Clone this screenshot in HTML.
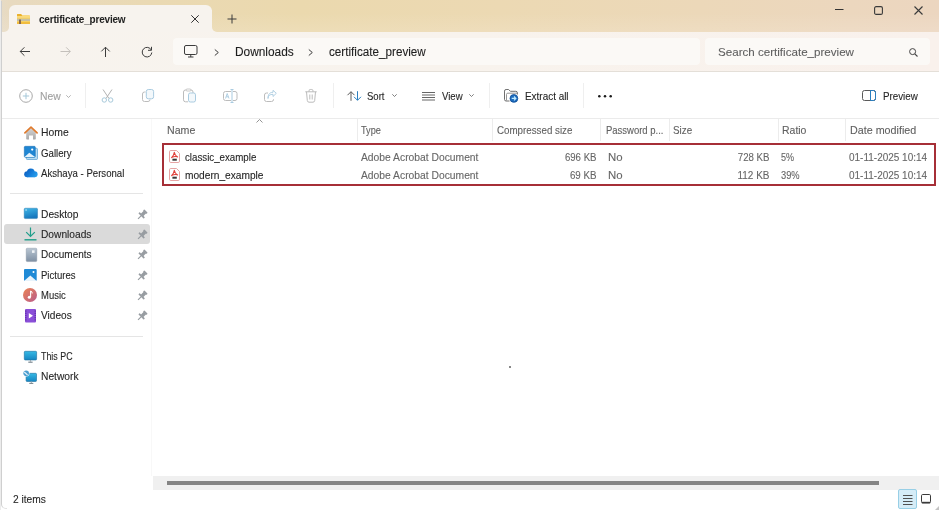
<!DOCTYPE html>
<html><head><meta charset="utf-8">
<style>
*{margin:0;padding:0;box-sizing:border-box}
html,body{width:939px;height:510px;overflow:hidden;background:#fff}
body{position:relative;font-family:"Liberation Sans",sans-serif;color:#1c1c1c}
.a{position:absolute}
.t{position:absolute;white-space:nowrap;line-height:1;filter:grayscale(1);-webkit-text-stroke:0.1px currentColor}
svg{position:absolute;overflow:visible}
#lightbg{left:0;top:0;width:939px;height:72px;background:linear-gradient(90deg,#f7f3ee 0%,#f8f3ed 50%,#f9f1ec 100%);border-bottom:1px solid #e4dfd8}
.bgtan{position:absolute;background-image:linear-gradient(180deg,rgba(255,255,255,0) 40%,rgba(255,255,255,0.12) 100%),linear-gradient(90deg,#e6dbc6 0px,#e8dac0 9px,#ead9b3 150px,#ebd9ae 300px,#ecd9b3 500px,#ecd8b9 700px,#ecd7be 850px,#ecd6c0 939px);background-size:939px 32px;background-repeat:no-repeat}
#tab{left:9px;top:5px;width:203px;height:27px;background:#f7f3ee;border-radius:6px 6px 0 0}
#addr{left:173px;top:38px;width:527px;height:27px;background:#fbf9f6;border-radius:4px}
#search{left:705px;top:38px;width:225px;height:27px;background:#fbf9f6;border-radius:4px}
#tb{left:0;top:72px;width:939px;height:47px;background:#fff;border-bottom:1px solid #ebebeb}
.sep{position:absolute;width:1px;top:83px;height:25px;background:#efefef}
.csep{position:absolute;width:1px;top:119px;height:22px;background:#ececec}
.nt{font-size:10.3px;color:#262626}
.hd{font-size:10.3px;color:#606060}
.rw{font-size:10.3px;color:#262626}
.gr{font-size:10.3px;color:#666}
.tl{font-size:10.3px;color:#262626}
.pin{position:absolute;left:137px;width:10px;height:10px}
</style></head><body>
<div id="lightbg" class="a"></div>
<div class="bgtan" style="left:0;top:0;width:939px;height:10px;background-position:0 0"></div>
<div class="bgtan" style="left:0;top:0;width:9px;height:32px;background-position:0 0;border-bottom-right-radius:5px"></div>
<div class="bgtan" style="left:212px;top:0;width:727px;height:32px;background-position:-212px 0;border-bottom-left-radius:5px"></div>
<div id="tab" class="a"></div>
<div id="addr" class="a"></div>
<div id="search" class="a"></div>
<div id="tb" class="a"></div>

<!-- window left border -->
<div class="a" style="left:1px;top:1px;width:6px;height:508px;border-left:1px solid #cfcfcf;border-bottom:1px solid #e2e2e2;border-bottom-left-radius:5px"></div><div class="a" style="left:0;top:0;width:1px;height:510px;background:#ececec"></div>

<!-- ===== TITLE BAR ===== -->
<svg style="left:17px;top:13.5px" width="13" height="10" viewBox="0 0 13 10"><path d="M0 0.8 A0.8 0.8 0 0 1 0.8 0 H4 L5.2 1.2 H12.2 A0.8 0.8 0 0 1 13 2 V9.2 A0.8 0.8 0 0 1 12.2 10 H0.8 A0.8 0.8 0 0 1 0 9.2 Z" fill="#f7d062"/><path d="M0 0.8 A0.8 0.8 0 0 1 0.8 0 H4 L5.5 2.3 H0 Z" fill="#eab02c"/><rect x="0" y="2.3" width="13" height="1.2" fill="#fbe08a"/><rect x="0" y="4.8" width="13" height="2.2" fill="#c6c0a4"/><rect x="0" y="8" width="13" height="2" fill="#f2bd3e"/><rect x="2" y="5.5" width="2" height="4.5" fill="#8b6a48"/></svg>
<div class="t" style="left:38.5px;top:14px;font-size:10.8px;color:#222;font-weight:bold;letter-spacing:-0.2px;-webkit-text-stroke:0;transform:scaleX(0.925);transform-origin:0 0">certificate_preview</div>
<svg style="left:190.5px;top:14.5px" width="8" height="8" viewBox="0 0 8 8"><path d="M0.3 0.3 L7.7 7.7 M7.7 0.3 L0.3 7.7" stroke="#333" stroke-width="1"/></svg>
<svg style="left:227px;top:14px" width="10" height="10" viewBox="0 0 10 10"><path d="M5 0.5 V9.5 M0.5 5 H9.5" stroke="#3a3a3a" stroke-width="1"/></svg>
<svg style="left:835px;top:9px" width="9" height="2" viewBox="0 0 9 2"><path d="M0 0.5 H8.5" stroke="#333" stroke-width="1"/></svg>
<svg style="left:874px;top:6px" width="9" height="9" viewBox="0 0 9 9"><rect x="0.6" y="0.6" width="7.8" height="7.8" rx="1.5" fill="none" stroke="#3a3a3a" stroke-width="1.1"/></svg>
<svg style="left:914px;top:5.5px" width="9" height="9" viewBox="0 0 9 9"><path d="M0.5 0.5 L8.5 8.5 M8.5 0.5 L0.5 8.5" stroke="#3a3a3a" stroke-width="1.1"/></svg>

<!-- ===== NAV BAR ===== -->
<svg style="left:19px;top:46px" width="12" height="12" viewBox="0 0 12 12"><path d="M11 5.5 H1.2 M5.4 1.3 L1.2 5.5 L5.4 9.7" fill="none" stroke="#3c3c3c" stroke-width="1"/></svg>
<svg style="left:60px;top:46px" width="12" height="12" viewBox="0 0 12 12"><path d="M0.5 5.5 H10.3 M6.1 1.3 L10.3 5.5 L6.1 9.7" fill="none" stroke="#c4c0bb" stroke-width="1"/></svg>
<svg style="left:100px;top:46px" width="12" height="12" viewBox="0 0 12 12"><path d="M5.5 11 V1.2 M1.3 5.4 L5.5 1.2 L9.7 5.4" fill="none" stroke="#3c3c3c" stroke-width="1"/></svg>
<svg style="left:141px;top:46px" width="12" height="12" viewBox="0 0 12 12"><path d="M10.3 4 A4.8 4.8 0 1 0 10.8 6.5" fill="none" stroke="#3c3c3c" stroke-width="1"/><path d="M10.5 0.8 V4.3 H7" fill="none" stroke="#3c3c3c" stroke-width="1"/></svg>
<svg style="left:184px;top:45px" width="14" height="13" viewBox="0 0 14 13"><rect x="0.5" y="0.5" width="12.5" height="9" rx="1.5" fill="none" stroke="#3c3c3c" stroke-width="1"/><path d="M4 12 H9.5 M6.75 9.5 V12" stroke="#3c3c3c" stroke-width="1"/></svg>
<svg style="left:214px;top:48.5px" width="6" height="7" viewBox="0 0 6 7"><path d="M0.8 0.5 L4.3 3.5 L0.8 6.5" fill="none" stroke="#3c3c3c" stroke-width="1"/></svg>
<div class="t" style="left:235px;top:45.6px;font-size:12px;color:#1e1e1e;transform:scaleX(0.990);transform-origin:0 0">Downloads</div>
<svg style="left:308px;top:48.5px" width="6" height="7" viewBox="0 0 6 7"><path d="M0.8 0.5 L4.3 3.5 L0.8 6.5" fill="none" stroke="#3c3c3c" stroke-width="1"/></svg>
<div class="t" style="left:328.5px;top:45.6px;font-size:12px;color:#1e1e1e;transform:scaleX(0.974);transform-origin:0 0">certificate_preview</div>
<div class="t" style="left:718px;top:47.2px;font-size:11.8px;color:#5f5f5f;transform:scaleX(0.983);transform-origin:0 0">Search certificate_preview</div>
<svg style="left:909px;top:48px" width="9" height="9" viewBox="0 0 9 9"><circle cx="3.6" cy="3.6" r="3" fill="none" stroke="#444" stroke-width="1"/><path d="M5.8 5.8 L8.5 8.5" stroke="#444" stroke-width="1.1"/></svg>

<!-- ===== TOOLBAR ===== -->
<svg style="left:19px;top:88.5px" width="14" height="14" viewBox="0 0 14 14"><circle cx="7" cy="7" r="6.3" fill="none" stroke="#a9a9a9" stroke-width="1"/><path d="M7 3.8 V10.2 M3.8 7 H10.2" stroke="#a5c7d8" stroke-width="1"/></svg>
<div class="t tl" style="left:40px;top:91.6px;color:#a0a0a0;transform:scaleX(1.005);transform-origin:0 0">New</div>
<svg style="left:65.5px;top:94.5px" width="5" height="3" viewBox="0 0 5 3"><path d="M0.3 0.3 L2.5 2.5 L4.7 0.3" fill="none" stroke="#a0a0a0" stroke-width="0.8"/></svg>
<div class="sep" style="left:85px"></div>
<!-- scissors -->
<svg style="left:101px;top:89px" width="13" height="14" viewBox="0 0 13 14"><path d="M2 0.5 L8 9.5 M11 0.5 L5 9.5" stroke="#b3b3b3" stroke-width="1"/><circle cx="3.3" cy="11" r="2.2" fill="none" stroke="#a8cadb" stroke-width="1"/><circle cx="9.7" cy="11" r="2.2" fill="none" stroke="#a8cadb" stroke-width="1"/></svg>
<!-- copy -->
<svg style="left:142px;top:89px" width="13" height="14" viewBox="0 0 13 14"><path d="M3.5 3 H2.5 A2 2 0 0 0 0.5 5 V10.5 A2 2 0 0 0 2.5 12.5 H6 A2 2 0 0 0 8 10.5" fill="none" stroke="#bcbcbc" stroke-width="1"/><rect x="4.3" y="0.5" width="7.3" height="9.3" rx="2" fill="#f3f8fb" stroke="#a9cbe0" stroke-width="1"/></svg>
<!-- paste -->
<svg style="left:182.5px;top:89px" width="14" height="14" viewBox="0 0 14 14"><path d="M5 12.8 H2.5 A2 2 0 0 1 0.5 10.8 V3 A2 2 0 0 1 2.5 1 H8 A2 2 0 0 1 10 3 V4" fill="none" stroke="#bcbcbc" stroke-width="1"/><rect x="3" y="0" width="5" height="2" rx="1" fill="#fff" stroke="#bcbcbc" stroke-width="0.8"/><rect x="5.5" y="4" width="7" height="9" rx="1.8" fill="#f3f8fb" stroke="#a9cbe0" stroke-width="1"/></svg>
<!-- rename -->
<svg style="left:222.5px;top:88.5px" width="15" height="14" viewBox="0 0 15 14"><rect x="0.5" y="2.5" width="13.5" height="9" rx="2" fill="none" stroke="#bcbcbc" stroke-width="1"/><rect x="8" y="1" width="2" height="12" fill="#fff"/><path d="M9 0.5 V13.5 M7.5 0.5 H10.5 M7.5 13.5 H10.5" stroke="#a9cbe0" stroke-width="1"/><path d="M2.5 9.5 L4.2 4.5 L6 9.5 M3.1 7.8 H5.4" fill="none" stroke="#a9cbe0" stroke-width="0.9"/></svg>
<!-- share -->
<svg style="left:264px;top:90px" width="13" height="12" viewBox="0 0 13 12"><path d="M4 3 H2.5 A2 2 0 0 0 0.5 5 V9.5 A2 2 0 0 0 2.5 11.5 H7.5 A2 2 0 0 0 9.5 9.5 V9" fill="none" stroke="#bcbcbc" stroke-width="1"/><path d="M4 8.5 C4 5.5 6 4.3 9 4.3 V6.5 L12.3 3.3 L9 0.3 V2.3 C5.5 2.3 4 4.5 4 8.5 Z" fill="none" stroke="#a9cbe0" stroke-width="0.9"/></svg>
<!-- delete -->
<svg style="left:305px;top:89px" width="12" height="14" viewBox="0 0 12 14"><path d="M0.3 2.8 H11.7 M4 2.8 V1.8 A1.3 1.3 0 0 1 5.3 0.5 H6.7 A1.3 1.3 0 0 1 8 1.8 V2.8 M1.5 2.8 L2.3 11.5 A1.8 1.8 0 0 0 4 13.2 H8 A1.8 1.8 0 0 0 9.7 11.5 L10.5 2.8 M4.8 5.5 V10.5 M7.2 5.5 V10.5" fill="none" stroke="#bcbcbc" stroke-width="1"/></svg>
<div class="sep" style="left:333px"></div>
<!-- sort -->
<svg style="left:346.5px;top:90.5px" width="15" height="10" viewBox="0 0 15 10"><path d="M4 9.8 V0.8 M0.5 4.2 L4 0.7 L7.5 4.2" fill="none" stroke="#5a5a5a" stroke-width="1"/><path d="M10.5 0.2 V9.2 M7 5.8 L10.5 9.3 L14 5.8" fill="none" stroke="#2a7fc0" stroke-width="1"/></svg>
<div class="t tl" style="left:367px;top:91.6px;transform:scaleX(0.926);transform-origin:0 0">Sort</div>
<svg style="left:391.5px;top:94.3px" width="5" height="3" viewBox="0 0 5 3"><path d="M0.3 0.3 L2.5 2.5 L4.7 0.3" fill="none" stroke="#606060" stroke-width="0.8"/></svg>
<!-- view -->
<svg style="left:421.5px;top:91.6px" width="14" height="9" viewBox="0 0 14 9"><path d="M0 0.5 H13 M0 3 H13 M0 5.5 H13 M0 8 H13" stroke="#555" stroke-width="0.9"/></svg>
<div class="t tl" style="left:441.5px;top:91.6px;transform:scaleX(0.930);transform-origin:0 0">View</div>
<svg style="left:469px;top:94.3px" width="5" height="3" viewBox="0 0 5 3"><path d="M0.3 0.3 L2.5 2.5 L4.7 0.3" fill="none" stroke="#606060" stroke-width="0.8"/></svg>
<div class="sep" style="left:488.5px"></div>
<!-- extract -->
<svg style="left:503.5px;top:89px" width="15" height="14" viewBox="0 0 15 14"><path d="M5.5 12 H2 A1.6 1.6 0 0 1 0.5 10.4 V2.1 A1.6 1.6 0 0 1 2.1 0.5 H4.6 L6.4 2.3 H11.8 A1.6 1.6 0 0 1 13.4 3.9 V5.5" fill="none" stroke="#6e6e6e" stroke-width="1"/><path d="M2.5 11.5 V5.5 A1.3 1.3 0 0 1 3.8 4.2 H13.3" fill="none" stroke="#8a8a8a" stroke-width="0.9"/><circle cx="9.9" cy="9.4" r="3.9" fill="#1c6cbf" stroke="#0f4d94" stroke-width="0.8"/><path d="M7.7 9.4 H11.9 M10 7.5 L11.9 9.4 L10 11.3" fill="none" stroke="#bfeaff" stroke-width="1.1"/></svg>
<div class="t tl" style="left:524.5px;top:91.6px;transform:scaleX(0.964);transform-origin:0 0">Extract all</div>
<div class="sep" style="left:583px"></div>
<svg style="left:597.5px;top:94.5px" width="14" height="3" viewBox="0 0 14 3"><circle cx="1.3" cy="1.3" r="1.25" fill="#1a1a1a"/><circle cx="7" cy="1.3" r="1.25" fill="#1a1a1a"/><circle cx="12.7" cy="1.3" r="1.25" fill="#1a1a1a"/></svg>
<!-- preview -->
<svg style="left:862px;top:90px" width="14" height="11" viewBox="0 0 14 11"><rect x="0.5" y="0.5" width="13" height="10" rx="2" fill="none" stroke="#5a5a5a" stroke-width="1"/><path d="M8.5 0.5 V10.5" stroke="#2a7fc0" stroke-width="1"/><path d="M8.5 0.5 H11.5 A2 2 0 0 1 13.5 2.5 V8.5 A2 2 0 0 1 11.5 10.5 H8.5" fill="none" stroke="#2a7fc0" stroke-width="1"/></svg>
<div class="t tl" style="left:882.5px;top:91.6px;transform:scaleX(0.950);transform-origin:0 0">Preview</div>

<!-- ===== NAV PANE ===== -->
<div class="a" style="left:151px;top:119px;width:1px;height:357px;background:#f8f8f8"></div>
<div class="a" style="left:3.5px;top:224px;width:146px;height:20px;background:#dadada;border-radius:3px"></div>
<div class="a" style="left:10px;top:193px;width:133px;height:1px;background:#e5e5e5"></div>
<div class="a" style="left:10px;top:336px;width:133px;height:1px;background:#e5e5e5"></div>

<!-- home -->
<svg style="left:23.5px;top:125.5px" width="14" height="14" viewBox="0 0 14 14"><defs><linearGradient id="hg" x1="0" y1="0" x2="0" y2="1"><stop offset="0" stop-color="#d4d4d4"/><stop offset="1" stop-color="#a9a9a9"/></linearGradient></defs><path d="M2.2 6.2 L7 2 L11.8 6.2 V12.8 A0.8 0.8 0 0 1 11 13.6 H9 V9.5 H5 V13.6 H3 A0.8 0.8 0 0 1 2.2 12.8 Z" fill="url(#hg)"/><path d="M0.9 6.9 L7 1.1 L13.1 6.9" fill="none" stroke="#df7b2e" stroke-width="1.7" stroke-linecap="round" stroke-linejoin="round"/></svg>
<div class="t nt" style="left:40.8px;top:128.0px;transform:scaleX(1.007);transform-origin:0 0">Home</div>
<!-- gallery -->
<svg style="left:23.5px;top:145.5px" width="14" height="14" viewBox="0 0 14 14"><rect x="2.3" y="2.3" width="11.2" height="11.2" rx="1" fill="#b5dcf3" stroke="#3f8fc8" stroke-width="0.6"/><rect x="0.3" y="0.3" width="11" height="11" rx="1" fill="#1f86d3" stroke="#1468ad" stroke-width="0.5"/><path d="M0.5 11.1 L5.3 6.8 L11.1 11.1 Z" fill="#e2f2fc"/><circle cx="8.2" cy="3.6" r="1.1" fill="#fff"/></svg>
<div class="t nt" style="left:40.8px;top:148.5px;transform:scaleX(0.939);transform-origin:0 0">Gallery</div>
<!-- onedrive -->
<svg style="left:23.5px;top:167.8px" width="14" height="10" viewBox="0 0 14 10"><defs><linearGradient id="od" gradientUnits="userSpaceOnUse" x1="2" y1="1" x2="12" y2="9"><stop offset="0" stop-color="#0b5cbf"/><stop offset="0.55" stop-color="#1780db"/><stop offset="1" stop-color="#2aa0ec"/></linearGradient></defs><g fill="url(#od)"><circle cx="6.8" cy="4.3" r="3.9"/><circle cx="3.2" cy="6.2" r="3"/><circle cx="10.6" cy="6.3" r="3"/><rect x="3.2" y="4.5" width="7.4" height="4.8"/></g></svg>
<div class="t nt" style="left:40.8px;top:168.5px;transform:scaleX(0.933);transform-origin:0 0">Akshaya - Personal</div>

<!-- desktop -->
<svg style="left:23.5px;top:208.3px" width="14" height="11" viewBox="0 0 14 11"><defs><linearGradient id="dk" x1="0" y1="0" x2="0.3" y2="1"><stop offset="0" stop-color="#41b8e8"/><stop offset="1" stop-color="#1677bd"/></linearGradient></defs><rect x="0.2" y="0.2" width="13.3" height="10.4" rx="1" fill="url(#dk)" stroke="#1a6aa5" stroke-width="0.4"/><rect x="1.5" y="1.5" width="1.2" height="1" fill="#fff"/></svg>
<div class="t nt" style="left:40.8px;top:209.6px;transform:scaleX(0.992);transform-origin:0 0">Desktop</div>
<!-- downloads -->
<svg style="left:24px;top:227px" width="13" height="14" viewBox="0 0 13 14"><path d="M6.5 0.5 V9.3 M2.2 5.2 L6.5 9.5 L10.8 5.2" fill="none" stroke="#1f9e8a" stroke-width="1.2"/><path d="M0.5 12.8 H12.5" stroke="#1f9e8a" stroke-width="1.4"/></svg>
<div class="t nt" style="left:40.8px;top:229.5px;transform:scaleX(0.990);transform-origin:0 0">Downloads</div>
<!-- documents -->
<svg style="left:25.5px;top:248px" width="11" height="14" viewBox="0 0 11 14"><defs><linearGradient id="dc" x1="0" y1="0" x2="0" y2="1"><stop offset="0" stop-color="#b9c6d3"/><stop offset="1" stop-color="#7f90a3"/></linearGradient></defs><rect x="0.2" y="0.2" width="10.6" height="13.4" rx="1" fill="url(#dc)" stroke="#7d8c9c" stroke-width="0.4"/><rect x="6" y="2.3" width="2.6" height="2.6" fill="#eef2f6"/></svg>
<div class="t nt" style="left:40.8px;top:249.8px;transform:scaleX(0.971);transform-origin:0 0">Documents</div>
<!-- pictures -->
<svg style="left:24px;top:268.5px" width="13" height="13" viewBox="0 0 13 13"><rect x="0" y="0" width="12.7" height="12" rx="1" fill="#1f8ad6"/><path d="M0 12 L6.3 6.5 L12.7 12 Z" fill="#e8f4fc"/><circle cx="9.5" cy="3" r="1" fill="#fff"/></svg>
<div class="t nt" style="left:40.8px;top:270.8px;transform:scaleX(0.927);transform-origin:0 0">Pictures</div>
<!-- music -->
<svg style="left:23.3px;top:288px" width="14" height="14" viewBox="0 0 14 14"><defs><linearGradient id="mg" x1="0" y1="0" x2="1" y2="1"><stop offset="0" stop-color="#ec8452"/><stop offset="1" stop-color="#b85c8c"/></linearGradient></defs><circle cx="7" cy="7" r="7" fill="url(#mg)"/><path d="M7.6 3 V9" stroke="#fff" stroke-width="1.1"/><circle cx="6.3" cy="9.2" r="1.5" fill="#fff"/><path d="M7.6 3 Q9.5 3.5 9.2 5.5" fill="none" stroke="#fff" stroke-width="1"/></svg>
<div class="t nt" style="left:40.8px;top:291.0px;transform:scaleX(0.919);transform-origin:0 0">Music</div>
<!-- videos -->
<svg style="left:25px;top:308.5px" width="12" height="14" viewBox="0 0 12 14"><rect x="0" y="0" width="11" height="13.5" rx="1" fill="#8a4fd8"/><path d="M0.8 1.5 V12.5 M10.2 1.5 V12.5" stroke="#5e2ea8" stroke-width="1.2" stroke-dasharray="1.2 1"/><path d="M3.8 4 L8 6.75 L3.8 9.5 Z" fill="#fff"/></svg>
<div class="t nt" style="left:40.8px;top:311.1px;transform:scaleX(0.981);transform-origin:0 0">Videos</div>

<!-- pins -->
<svg class="pin" style="top:209.7px" viewBox="0 0 10 10"><g transform="rotate(45 5 5)" fill="#979ca1"><rect x="2.6" y="-0.6" width="4.8" height="1.8" rx="0.6"/><rect x="3.3" y="0.8" width="3.4" height="4.2"/><rect x="1.2" y="4.6" width="7.6" height="1.8" rx="0.6"/><rect x="4.45" y="6" width="1.1" height="4.6"/></g></svg>
<svg class="pin" style="top:230.0px" viewBox="0 0 10 10"><g transform="rotate(45 5 5)" fill="#979ca1"><rect x="2.6" y="-0.6" width="4.8" height="1.8" rx="0.6"/><rect x="3.3" y="0.8" width="3.4" height="4.2"/><rect x="1.2" y="4.6" width="7.6" height="1.8" rx="0.6"/><rect x="4.45" y="6" width="1.1" height="4.6"/></g></svg>
<svg class="pin" style="top:250.3px" viewBox="0 0 10 10"><g transform="rotate(45 5 5)" fill="#979ca1"><rect x="2.6" y="-0.6" width="4.8" height="1.8" rx="0.6"/><rect x="3.3" y="0.8" width="3.4" height="4.2"/><rect x="1.2" y="4.6" width="7.6" height="1.8" rx="0.6"/><rect x="4.45" y="6" width="1.1" height="4.6"/></g></svg>
<svg class="pin" style="top:270.6px" viewBox="0 0 10 10"><g transform="rotate(45 5 5)" fill="#979ca1"><rect x="2.6" y="-0.6" width="4.8" height="1.8" rx="0.6"/><rect x="3.3" y="0.8" width="3.4" height="4.2"/><rect x="1.2" y="4.6" width="7.6" height="1.8" rx="0.6"/><rect x="4.45" y="6" width="1.1" height="4.6"/></g></svg>
<svg class="pin" style="top:290.9px" viewBox="0 0 10 10"><g transform="rotate(45 5 5)" fill="#979ca1"><rect x="2.6" y="-0.6" width="4.8" height="1.8" rx="0.6"/><rect x="3.3" y="0.8" width="3.4" height="4.2"/><rect x="1.2" y="4.6" width="7.6" height="1.8" rx="0.6"/><rect x="4.45" y="6" width="1.1" height="4.6"/></g></svg>
<svg class="pin" style="top:311.2px" viewBox="0 0 10 10"><g transform="rotate(45 5 5)" fill="#979ca1"><rect x="2.6" y="-0.6" width="4.8" height="1.8" rx="0.6"/><rect x="3.3" y="0.8" width="3.4" height="4.2"/><rect x="1.2" y="4.6" width="7.6" height="1.8" rx="0.6"/><rect x="4.45" y="6" width="1.1" height="4.6"/></g></svg>

<!-- this pc -->
<svg style="left:24.3px;top:350.5px" width="13" height="12" viewBox="0 0 13 12"><defs><linearGradient id="pc" x1="0" y1="0" x2="0" y2="1"><stop offset="0" stop-color="#36b9e4"/><stop offset="1" stop-color="#1585c2"/></linearGradient></defs><rect x="0.3" y="0.3" width="12.3" height="8.7" rx="0.9" fill="url(#pc)" stroke="#1b6e9e" stroke-width="0.6"/><path d="M4.3 11.2 H8.6" stroke="#7a8790" stroke-width="1.2"/><path d="M6.45 9 V10.8" stroke="#9aa5ad" stroke-width="1"/></svg>
<div class="t nt" style="left:41px;top:352.0px;transform:scaleX(0.861);transform-origin:0 0">This PC</div>
<!-- network -->
<svg style="left:23.3px;top:369.5px" width="14" height="14" viewBox="0 0 14 14"><defs><linearGradient id="nw" x1="0" y1="0" x2="0" y2="1"><stop offset="0" stop-color="#36b9e4"/><stop offset="1" stop-color="#1585c2"/></linearGradient></defs><rect x="3.1" y="3.3" width="10.4" height="8.2" rx="0.9" fill="url(#nw)" stroke="#1b6e9e" stroke-width="0.6"/><path d="M6.3 13.4 H10.3" stroke="#7a8790" stroke-width="1.1"/><path d="M8.3 11.5 V13" stroke="#9aa5ad" stroke-width="1"/><circle cx="3.2" cy="3.2" r="3.2" fill="#fff"/><circle cx="3.2" cy="3.2" r="2.8" fill="#4d9fd0"/><path d="M1.2 2 Q3 3.5 4.6 5.2" stroke="#e6f3fb" stroke-width="1.1" fill="none"/></svg>
<div class="t nt" style="left:40.8px;top:371.6px;transform:scaleX(0.995);transform-origin:0 0">Network</div>

<!-- ===== CONTENT HEADER ===== -->
<svg style="left:255.5px;top:118.5px" width="7" height="4" viewBox="0 0 7 4"><path d="M0.5 3.5 L3.5 0.5 L6.5 3.5" fill="none" stroke="#7a7a7a" stroke-width="0.8"/></svg>
<div class="t hd" style="left:167px;top:125.5px;transform:scaleX(1.031);transform-origin:0 0">Name</div>
<div class="csep" style="left:356.5px"></div>
<div class="t hd" style="left:360.5px;top:125.5px;transform:scaleX(0.891);transform-origin:0 0">Type</div>
<div class="csep" style="left:491.5px"></div>
<div class="t hd" style="left:496.5px;top:125.5px;transform:scaleX(0.948);transform-origin:0 0">Compressed size</div>
<div class="csep" style="left:600px"></div>
<div class="t hd" style="left:605.5px;top:125.5px;transform:scaleX(0.921);transform-origin:0 0">Password p...</div>
<div class="csep" style="left:668.5px"></div>
<div class="t hd" style="left:673px;top:125.5px;transform:scaleX(0.953);transform-origin:0 0">Size</div>
<div class="csep" style="left:777.5px"></div>
<div class="t hd" style="left:781.5px;top:125.5px;transform:scaleX(1.017);transform-origin:0 0">Ratio</div>
<div class="csep" style="left:845px"></div>
<div class="t hd" style="left:849.5px;top:125.5px;transform:scaleX(1.043);transform-origin:0 0">Date modified</div>

<!-- ===== ROWS ===== -->
<svg style="left:169px;top:150px" width="11" height="13" viewBox="0 0 11 13"><path d="M1.8 0.5 H7.5 L10.5 3.5 V11.2 A1.3 1.3 0 0 1 9.2 12.5 H1.8 A1.3 1.3 0 0 1 0.5 11.2 V1.8 A1.3 1.3 0 0 1 1.8 0.5 Z" fill="#fff" stroke="#e39a9a" stroke-width="0.9"/><path d="M5.3 2.4 C5.2 4.2 4.2 6 2.6 7.6 M5.3 2.4 C5.6 4.5 6.8 6 8.6 7 M3.2 7.2 C4.8 6.4 6.6 6.3 8.2 6.8" fill="none" stroke="#e0413b" stroke-width="1.1" stroke-linecap="round"/><rect x="3.4" y="8.7" width="4.4" height="2" fill="#3a3a3a"/></svg>
<div class="t rw" style="left:184.5px;top:153.4px;transform:scaleX(0.944);transform-origin:0 0">classic_example</div>
<div class="t gr" style="left:360.5px;top:153.4px;transform:scaleX(1.001);transform-origin:0 0">Adobe Acrobat Document</div>
<div class="t gr" style="left:500px;top:153.4px;width:96.5px;text-align:right;transform:scaleX(0.936);transform-origin:100% 0">696 KB</div>
<div class="t gr" style="left:607.5px;top:153.4px;transform:scaleX(1.108);transform-origin:0 0">No</div>
<div class="t gr" style="left:673px;top:153.4px;width:96.5px;text-align:right;transform:scaleX(0.939);transform-origin:100% 0">728 KB</div>
<div class="t gr" style="left:781px;top:153.4px;transform:scaleX(0.880);transform-origin:0 0">5%</div>
<div class="t gr" style="left:848.5px;top:153.4px;transform:scaleX(0.970);transform-origin:0 0">01-11-2025 10:14</div>

<svg style="left:169px;top:168.2px" width="11" height="13" viewBox="0 0 11 13"><path d="M1.8 0.5 H7.5 L10.5 3.5 V11.2 A1.3 1.3 0 0 1 9.2 12.5 H1.8 A1.3 1.3 0 0 1 0.5 11.2 V1.8 A1.3 1.3 0 0 1 1.8 0.5 Z" fill="#fff" stroke="#e39a9a" stroke-width="0.9"/><path d="M5.3 2.4 C5.2 4.2 4.2 6 2.6 7.6 M5.3 2.4 C5.6 4.5 6.8 6 8.6 7 M3.2 7.2 C4.8 6.4 6.6 6.3 8.2 6.8" fill="none" stroke="#e0413b" stroke-width="1.1" stroke-linecap="round"/><rect x="3.4" y="8.7" width="4.4" height="2" fill="#3a3a3a"/></svg>
<div class="t rw" style="left:184.5px;top:171.3px;transform:scaleX(0.987);transform-origin:0 0">modern_example</div>
<div class="t gr" style="left:360.5px;top:171.3px;transform:scaleX(1.001);transform-origin:0 0">Adobe Acrobat Document</div>
<div class="t gr" style="left:500px;top:171.3px;width:96.5px;text-align:right;transform:scaleX(0.948);transform-origin:100% 0">69 KB</div>
<div class="t gr" style="left:607.5px;top:171.3px;transform:scaleX(1.108);transform-origin:0 0">No</div>
<div class="t gr" style="left:673px;top:171.3px;width:96.5px;text-align:right;transform:scaleX(0.969);transform-origin:100% 0">112 KB</div>
<div class="t gr" style="left:781px;top:171.3px;transform:scaleX(0.905);transform-origin:0 0">39%</div>
<div class="t gr" style="left:848.5px;top:171.3px;transform:scaleX(0.970);transform-origin:0 0">01-11-2025 10:14</div>

<!-- red highlight box -->
<div class="a" style="left:162px;top:143px;width:774px;height:43px;border:2px solid #a62f37"></div>

<!-- dot -->
<div class="a" style="left:509px;top:366px;width:2px;height:2px;background:#888"></div>

<!-- ===== SCROLLBAR ===== -->
<div class="a" style="left:153px;top:476px;width:786px;height:14px;background:#f0f0f0"></div>
<div class="a" style="left:167px;top:481px;width:711.5px;height:4px;background:#858585"></div>

<!-- ===== STATUS ===== -->
<div class="t nt" style="left:12.5px;top:494.8px;transform:scaleX(0.991);transform-origin:0 0">2 items</div>
<div class="a" style="left:897.5px;top:489px;width:19.5px;height:20px;background:#d5ecf7;border:1px solid #98cfe6;border-radius:2px"></div>
<svg style="left:903px;top:495px" width="10" height="10" viewBox="0 0 10 10"><path d="M0 0.5 H9.5 M0 3.5 H9.5 M0 6.5 H9.5 M0 9.5 H9.5" stroke="#505050" stroke-width="1"/></svg>
<svg style="left:921px;top:494px" width="10" height="10" viewBox="0 0 10 10"><rect x="0.5" y="0.5" width="9" height="8.3" rx="1.2" fill="none" stroke="#3a3a3a" stroke-width="1"/><path d="M0.8 8.6 H9.2" stroke="#3a3a3a" stroke-width="1.6"/></svg><svg style="left:935px;top:506px" width="4" height="4" viewBox="0 0 4 4"><path d="M4 0 V4 H0 Z" fill="#c4c4c4"/></svg>
</body></html>
